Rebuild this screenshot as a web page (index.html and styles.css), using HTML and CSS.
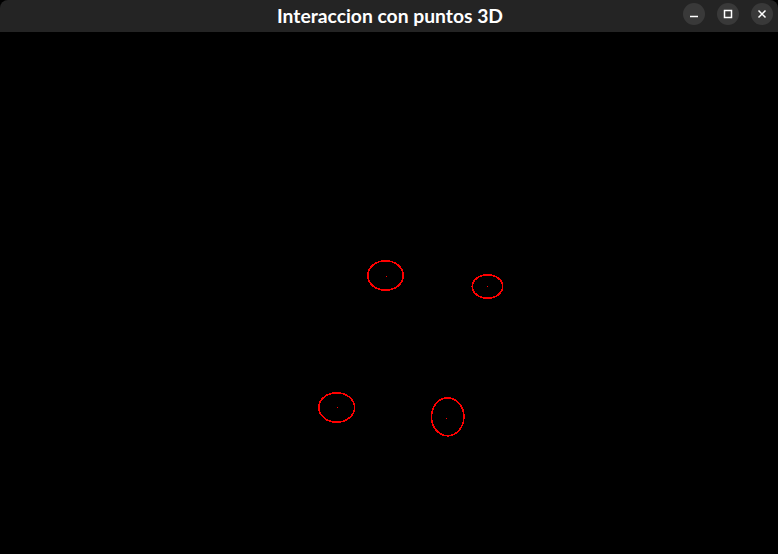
FILE: index.html
```html
<!DOCTYPE html>
<html>
<head>
<meta charset="utf-8">
<link rel="stylesheet" href="styles.css">
</head>
<body>
<div class="window">
  <header class="titlebar">
    <div class="title">Interaccion con puntos 3D</div>
    <div class="controls">
      <div class="btn"><svg width="22" height="22" viewBox="0 0 22 22"><line x1="7" y1="13.5" x2="15" y2="13.5" stroke="#fff" stroke-width="1.5"/></svg></div>
      <div class="btn"><svg width="22" height="22" viewBox="0 0 22 22"><rect x="7.5" y="7.5" width="7" height="7" fill="none" stroke="#fff" stroke-width="1.5"/></svg></div>
      <div class="btn"><svg width="22" height="22" viewBox="0 0 22 22"><path d="M7.5 7.5 L14.5 14.5 M14.5 7.5 L7.5 14.5" stroke="#fff" stroke-width="1.5"/></svg></div>
    </div>
  </header>
  <main class="canvas">
    <svg class="scene" width="778" height="522" viewBox="0 0 778 522">
      <g class="rings" fill="none" stroke="#ff0000" stroke-width="1.6">
        <ellipse cx="385.5" cy="243.5" rx="17.7" ry="14.7"/>
        <ellipse cx="487.5" cy="254.5" rx="15.2" ry="11.7"/>
        <ellipse cx="336.7" cy="375.5" rx="17.9" ry="14.7"/>
        <ellipse cx="447.7" cy="384.8" rx="16.2" ry="19"/>
      </g>
      <g fill="#ff0000">
        <rect x="386" y="244" width="1" height="1"/>
        <rect x="487" y="254" width="1" height="1"/>
        <rect x="337" y="375" width="1" height="1"/>
        <rect x="446" y="386" width="1" height="1"/>
      </g>
    </svg>
  </main>
</div>
</body>
</html>
```

FILE: styles.css
```css
html, body {
  margin: 0;
  padding: 0;
  background: #000;
  width: 778px;
  height: 554px;
  overflow: hidden;
}
.window {
  display: flex;
  flex-direction: column;
  width: 778px;
  height: 554px;
}
.titlebar {
  position: relative;
  height: 32px;
  flex: none;
  background: #242424;
  border-radius: 8px 8px 0 0;
  display: flex;
  align-items: center;
  justify-content: center;
}
.title {
  font-family: Lato, "Liberation Sans", sans-serif;
  font-weight: 700;
  font-size: 19.3px;
  color: #ffffff;
  line-height: 32px;
  margin-left: 2px;
}
.controls {
  position: absolute;
  right: 5px;
  top: 3px;
  display: flex;
  gap: 12px;
}
.btn {
  width: 22px;
  height: 22px;
  border-radius: 50%;
  background: #393939;
}
.btn svg {
  display: block;
}
.canvas {
  flex: 1;
  background: #000;
}
.scene {
  display: block;
}
.rings {
  shape-rendering: crispEdges;
}
```
